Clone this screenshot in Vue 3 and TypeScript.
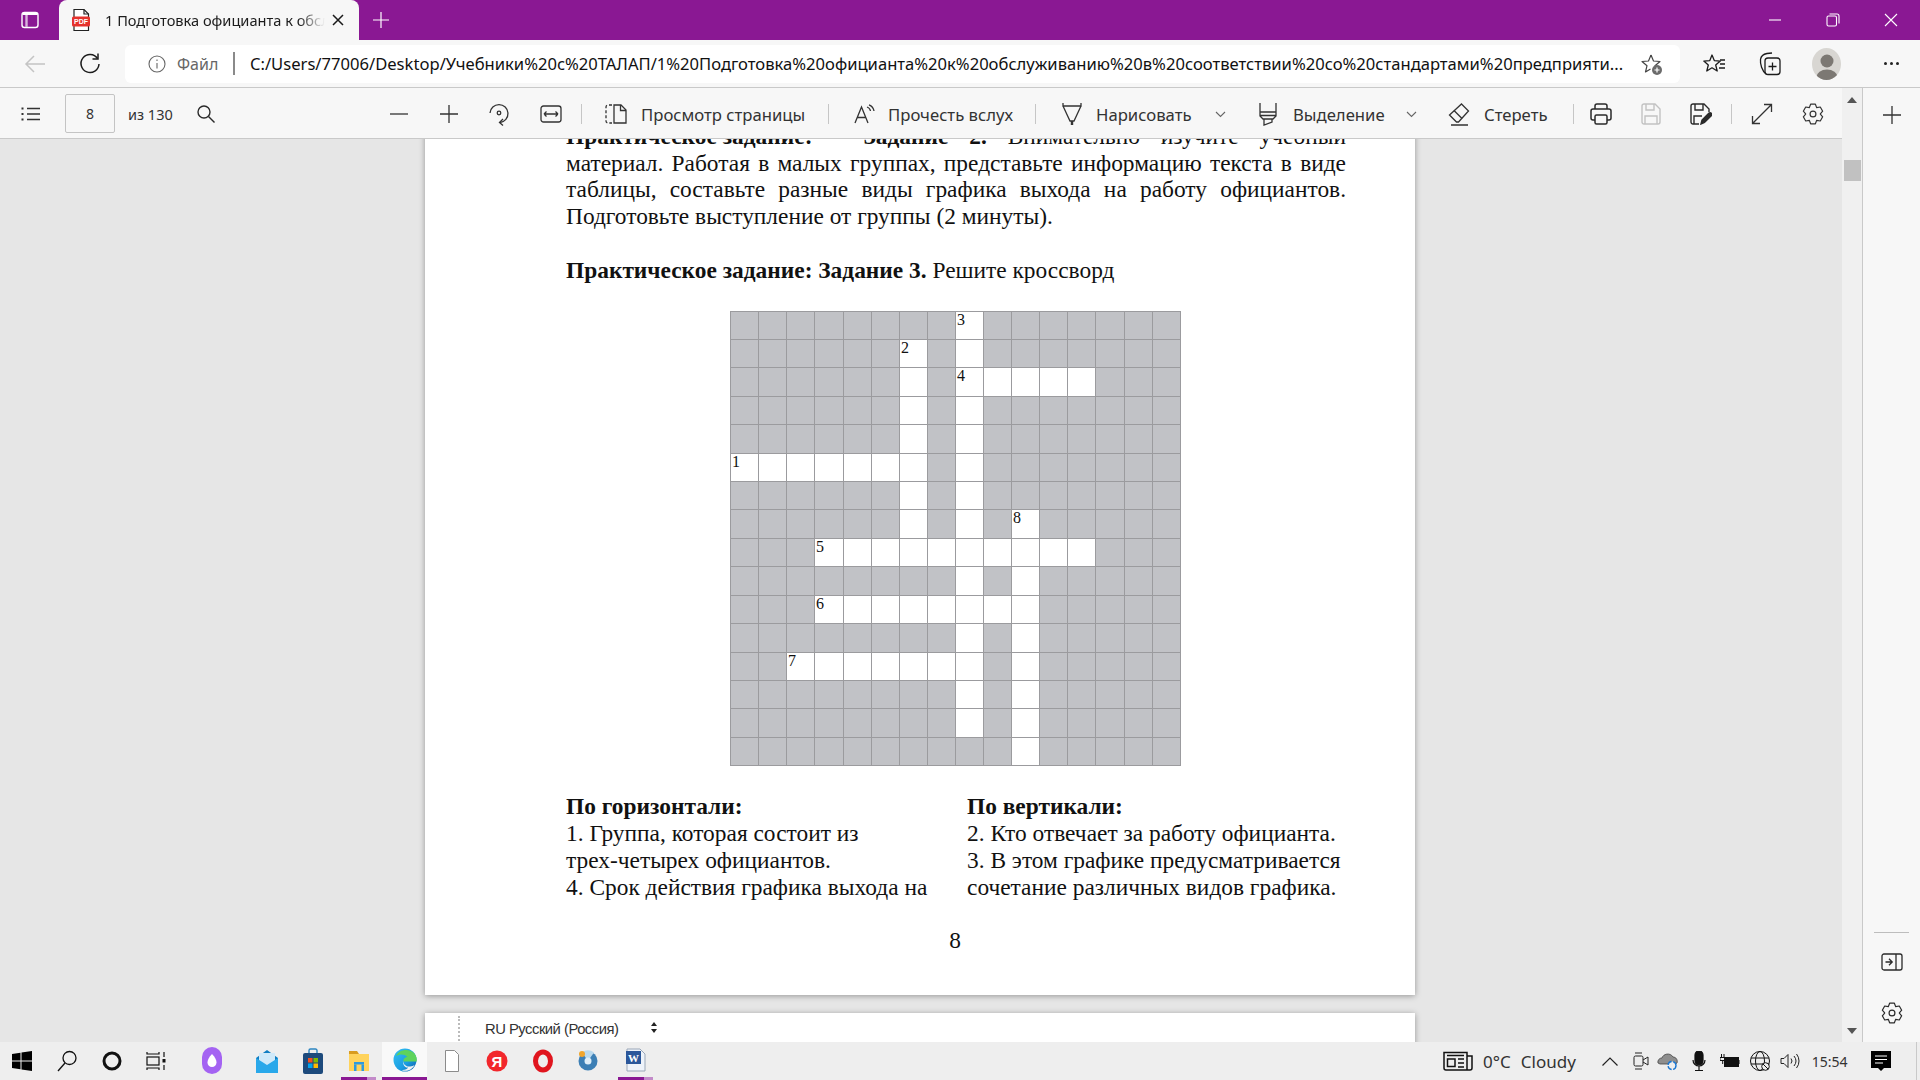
<template>
  <div class="screen">
    <!-- Browser title bar -->
    <header class="titlebar">
      <div class="tab-actions">
        <svg width="20" height="20" viewBox="0 0 20 20" fill="none" stroke="#fff" stroke-width="1.4">
          <rect x="2" y="2.5" width="16" height="15" rx="2.5" />
          <path d="M6.5 3v14" stroke="#d9b4dd" stroke-width="2.4" />
          <path d="M2.5 4h15" stroke-width="2" />
        </svg>
      </div>
      <div class="tab">
        <svg class="tab-icon" width="20" height="24" viewBox="0 0 20 24" fill="none">
          <path d="M3 22.5V1.5h10l4.500 4.500v16.500z" fill="#fff" stroke="#222" stroke-width="1.2" />
          <path d="M13 1.500v4.500h4.500" stroke="#222" stroke-width="1.2" />
          <rect x="1" y="8.500" width="18" height="10" rx="1.500" fill="#e5322d" />
          <text x="10" y="16" text-anchor="middle" class="pdf-text">PDF</text>
        </svg>
        <span class="tab-title">1 Подготовка официанта к обслуживанию</span>
        <svg class="tab-close" width="12" height="12" viewBox="0 0 12 12" stroke="#1a1a1a" stroke-width="1.500">
          <path d="M1 1l10 10M11 1L1 11" />
        </svg>
      </div>
      <svg class="tab-new" width="18" height="18" viewBox="0 0 18 18" stroke="#fff" stroke-width="1.200">
        <path d="M9 1v16M1 9h16" />
      </svg>
      <div class="window-controls">
        <svg width="14" height="14" viewBox="0 0 14 14" stroke="#fff" stroke-width="1.100" fill="none">
          <path d="M1 7h12" />
        </svg>
        <svg width="14" height="14" viewBox="0 0 14 14" stroke="#fff" stroke-width="1.100" fill="none">
          <rect x="1" y="3" width="9.500" height="10" rx="1.500" />
          <path d="M3.500 1h7.500a2 2 0 0 1 2 2v7.500" />
        </svg>
        <svg width="14" height="14" viewBox="0 0 14 14" stroke="#fff" stroke-width="1.100" fill="none">
          <path d="M1 1l12 12M13 1L1 13" />
        </svg>
      </div>
    </header>

    <!-- Address bar -->
    <div class="addressbar">
      <svg class="nav-back" width="22" height="20" viewBox="0 0 22 20" stroke="#c4c4c4" stroke-width="1.500" fill="none">
        <path d="M21 10H2M10 2l-8 8 8 8" />
      </svg>
      <svg class="nav-reload" width="22" height="24" viewBox="0 0 22 24" stroke="#1c1c1c" stroke-width="1.500" fill="none">
        <path d="M18.500 6.500A9 9 0 1 0 20 12" />
        <path d="M19 1.500v5.500h-5.500" />
      </svg>
      <div class="omnibox">
        <svg class="info" width="18" height="18" viewBox="0 0 18 18" fill="none" stroke="#666" stroke-width="1.100">
          <circle cx="9" cy="9" r="8" />
          <path d="M9 8v5.500M9 4.600v1.400" />
        </svg>
        <span class="scheme">Файл</span>
        <span class="scheme-sep"></span>
        <span class="url">{{ url }}</span>
        <svg class="star-add" width="24" height="24" viewBox="0 0 24 24" fill="none">
          <path d="M11 3l2.500 6 6.500.5-5 4.200 1 4.300M11 3L8.500 9 2 9.500l5 4.200L5.500 20l5-3" stroke="#444" stroke-width="1.200" stroke-linejoin="round" />
          <circle cx="17" cy="18" r="5" fill="#6b6b6b" />
          <path d="M17 15.500v5M14.500 18h5" stroke="#fff" stroke-width="1.200" />
        </svg>
      </div>
      <svg class="bar-fav" width="24" height="22" viewBox="0 0 24 22" fill="none" stroke="#1c1c1c" stroke-width="1.300" stroke-linejoin="round">
        <path d="M9 2l2.300 5.600 6 .5-4.600 3.900 1.500 6L9 14.800 3.800 18l1.500-6L.8 8.100l6-.5z" />
        <path d="M17 7h5M17 11h5M16 15h6" />
      </svg>
      <svg class="bar-coll" width="24" height="26" viewBox="0 0 24 26" fill="none" stroke="#1c1c1c" stroke-width="1.300">
        <path d="M8 23C4 20 2 13 2.500 8.500 3 5 6 3 9 2.500L14 2" />
        <rect x="7" y="7" width="15" height="16.500" rx="3" />
        <path d="M14.500 11.500v8M10.500 15.500h8" />
      </svg>
      <div class="avatar">
        <svg width="28" height="30" viewBox="0 0 28 30">
          <circle cx="14" cy="11" r="6.500" fill="#7c7873" />
          <ellipse cx="14" cy="27" rx="10.500" ry="7.500" fill="#7c7873" />
        </svg>
      </div>
      <div class="more"><i></i><i></i><i></i></div>
    </div>

    <div class="workspace">
      <div class="viewer-col">
        <!-- PDF toolbar -->
        <div class="pdf-toolbar">
          <svg class="t-list" width="20" height="14" viewBox="0 0 20 14" stroke="#333" stroke-width="1.300" fill="#333">
            <path d="M6 1.500h13M6 7h13M6 12.500h13" />
            <path d="M0.500 1.500h2M0.500 7h2M0.500 12.500h2" stroke-width="2" />
          </svg>
          <div class="page-input">8</div>
          <span class="page-total">из 130</span>
          <svg class="t-search" width="20" height="20" viewBox="0 0 20 20" fill="none" stroke="#2a2a2a" stroke-width="1.400">
            <circle cx="8" cy="8" r="6" />
            <path d="M12.500 12.500l6 6" />
          </svg>

          <svg class="t-minus" width="18" height="18" viewBox="0 0 18 18" stroke="#333" stroke-width="1.300"><path d="M0 9h18" /></svg>
          <svg class="t-plus" width="18" height="18" viewBox="0 0 18 18" stroke="#333" stroke-width="1.300"><path d="M0 9h18M9 0v18" /></svg>
          <svg class="t-rotate" width="22" height="24" viewBox="0 0 22 24" fill="none" stroke="#333" stroke-width="1.300">
            <path d="M2 11a9 9 0 1 1 10 9.500" />
            <circle cx="11" cy="11" r="1.800" />
            <path d="M15 17l-3.500 3.500 3.500 3" />
          </svg>
          <svg class="t-fit" width="22" height="18" viewBox="0 0 22 18" fill="none" stroke="#333" stroke-width="1.300">
            <rect x="1" y="1" width="20" height="16" rx="2.500" />
            <path d="M4 9h14M4 9l2.500-2.500M4 9l2.500 2.500M18 9l-2.500-2.500M18 9l-2.500 2.500" />
          </svg>
          <span class="t-sep sep-a"></span>
          <svg class="t-pageview" width="22" height="20" viewBox="0 0 22 20" fill="none" stroke="#333" stroke-width="1.300">
            <path d="M7 1H3a2 2 0 0 0-2 2v14a2 2 0 0 0 2 2h4" stroke-dasharray="3 2" />
            <path d="M9 1h7l5 5v13H9z" />
            <path d="M15.500 1v5.500H21" />
          </svg>
          <span class="t-label label-view">Просмотр страницы</span>
          <span class="t-sep sep-b"></span>
          <svg class="t-read" width="22" height="20" viewBox="0 0 22 20" fill="none" stroke="#333" stroke-width="1.300">
            <path d="M1 19L7.500 3 14 19M3.500 13.500h8" />
            <path d="M13 3a5 5 0 0 1 3.500 4M15 .800a8 8 0 0 1 5 6.200" />
          </svg>
          <span class="t-label label-read">Прочесть вслух</span>
          <span class="t-sep sep-c"></span>
          <svg class="t-draw" width="22" height="24" viewBox="0 0 22 24" fill="none" stroke="#333" stroke-width="1.300">
            <path d="M2 1v3h18V1M2 4l7 15h4l7-15" />
            <path d="M11 19v4" stroke-width="2.400" />
          </svg>
          <span class="t-label label-draw">Нарисовать</span>
          <svg class="t-chev chev-a" width="11" height="7" viewBox="0 0 11 7" fill="none" stroke="#666" stroke-width="1.100"><path d="M1 1l4.500 4.500L10 1" /></svg>
          <svg class="t-mark" width="20" height="24" viewBox="0 0 20 24" fill="none" stroke="#333" stroke-width="1.300">
            <path d="M2 1v9h16V1M2 10v4l3 3h10l3-3v-4M2 13.500h16M6 17v6l8-3v-3" />
          </svg>
          <span class="t-label label-mark">Выделение</span>
          <svg class="t-chev chev-b" width="11" height="7" viewBox="0 0 11 7" fill="none" stroke="#666" stroke-width="1.100"><path d="M1 1l4.500 4.500L10 1" /></svg>
          <svg class="t-erase" width="22" height="24" viewBox="0 0 22 24" fill="none" stroke="#333" stroke-width="1.300">
            <path d="M13.500 2l7 7-10 11h-2L1.500 13z" />
            <path d="M6 8.500l8 8M3 23h17" />
          </svg>
          <span class="t-label label-erase">Стереть</span>
          <span class="t-sep sep-d"></span>
          <svg class="t-print" width="22" height="22" viewBox="0 0 22 22" fill="none" stroke="#2a2a2a" stroke-width="1.500">
            <path d="M5 6V3a2 2 0 0 1 2-2h8a2 2 0 0 1 2 2v3" />
            <path d="M5 17H3a2 2 0 0 1-2-2V8a2 2 0 0 1 2-2h16a2 2 0 0 1 2 2v7a2 2 0 0 1-2 2h-2" />
            <rect x="5" y="12" width="12" height="9" rx="1.500" />
          </svg>
          <svg class="t-save" width="20" height="22" viewBox="0 0 20 22" fill="none" stroke="#c2c2c2" stroke-width="1.400">
            <path d="M1 3a2 2 0 0 1 2-2h11l5 5v13a2 2 0 0 1-2 2H3a2 2 0 0 1-2-2z" />
            <path d="M5 1v6h8V1M4 21v-8h12v8" />
          </svg>
          <svg class="t-saveas" width="22" height="22" viewBox="0 0 22 22" fill="none" stroke="#2a2a2a" stroke-width="1.400">
            <path d="M9 21H3a2 2 0 0 1-2-2V3a2 2 0 0 1 2-2h11l5 5v3" />
            <path d="M5 1v6h8V1M4 21v-8h8" />
            <path d="M11 21l1-4 7-7a1.800 1.800 0 0 1 2.500 2.500l-7 7z" fill="#2a2a2a" />
          </svg>
          <span class="t-sep sep-e"></span>
          <svg class="t-expand" width="22" height="22" viewBox="0 0 22 22" fill="none" stroke="#333" stroke-width="1.300">
            <path d="M1.500 20.500l19-19M13 1.500h7.500V9M1.500 13v7.500H9" />
          </svg>
          <svg class="t-gear" width="22" height="22" viewBox="0 0 24 24" fill="none" stroke="#333" stroke-width="1.300" stroke-linejoin="round">
            <path :d="gearPath" />
            <circle cx="12" cy="12" r="3.200" />
          </svg>
        </div>

        <!-- Scrolled PDF pages -->
        <main class="viewer">
          <article class="page">
            <div class="para first">
              <div class="jl"><b class="lead">Практическое задание:</b><span class="lead-gap"></span><b>Задание 2.</b> Внимательно изучите учебный</div>
              <div class="jl">материал. Работая в малых группах, представьте информацию текста в виде</div>
              <div class="jl">таблицы, составьте разные виды графика выхода на работу официантов.</div>
              <div>Подготовьте выступление от группы (2 минуты).</div>
            </div>
            <div class="para task"><b>Практическое задание: Задание 3.</b> Решите кроссворд</div>
            <div class="crossword">
              <div v-for="cell in cells" :key="cell.id" class="cw-cell" :class="{ open: cell.open }">
                <span v-if="cell.label" class="cw-num">{{ cell.label }}</span>
              </div>
            </div>
            <div class="clues">
              <div class="clue-col">
                <div><b>По горизонтали:</b></div>
                <div>1. Группа, которая состоит из</div>
                <div>трех-четырех официантов.</div>
                <div>4. Срок действия графика выхода на</div>
              </div>
              <div class="clue-col">
                <div><b>По вертикали:</b></div>
                <div>2. Кто отвечает за работу официанта.</div>
                <div>3. В этом графике предусматривается</div>
                <div>сочетание различных видов графика.</div>
              </div>
            </div>
            <div class="page-no">8</div>
          </article>
          <article class="page next">
            <span class="grip"></span>
            <span class="lang">RU Русский (Россия)</span>
            <span class="spin"><i class="up"></i><i class="down"></i></span>
          </article>
        </main>
      </div>

      <!-- Scrollbar -->
      <div class="scrollbar">
        <i class="arrow-up"></i>
        <div class="thumb"></div>
        <i class="arrow-down"></i>
      </div>

      <!-- Edge side rail -->
      <aside class="rail">
        <svg class="rail-plus" width="18" height="18" viewBox="0 0 18 18" stroke="#333" stroke-width="1.300"><path d="M9 0v18M0 9h18" /></svg>
        <div class="rail-line"></div>
        <svg class="rail-panel" width="22" height="18" viewBox="0 0 22 18" fill="none" stroke="#2a2a2a" stroke-width="1.300">
          <rect x="1" y="1" width="20" height="16" rx="2" />
          <path d="M15 1v16M4.500 9h6.500M8 5.800L11.200 9 8 12.200" />
        </svg>
        <svg class="rail-gear" width="22" height="22" viewBox="0 0 24 24" fill="none" stroke="#2a2a2a" stroke-width="1.300" stroke-linejoin="round">
          <path :d="gearPath" />
          <circle cx="12" cy="12" r="3.200" />
        </svg>
      </aside>
    </div>

    <!-- Windows taskbar -->
    <footer class="taskbar">
      <div class="slot s-win">
        <svg width="20" height="20" viewBox="0 0 20 20" fill="#000"><path d="M0 3l8.500-1.200V9.500H0zM9.500 1.600L20 0v9.500H9.500zM0 10.500h8.500v7.700L0 17zM9.500 10.500H20V20L9.500 18.400z" /></svg>
      </div>
      <div class="slot s-std">
        <svg width="20" height="22" viewBox="0 0 20 22" fill="none" stroke="#111" stroke-width="1.300"><circle cx="12.500" cy="8" r="6.500" /><path d="M8 13L1 21" /></svg>
      </div>
      <div class="slot s-std">
        <svg width="20" height="20" viewBox="0 0 20 20" fill="none" stroke="#111" stroke-width="3"><circle cx="10" cy="10" r="8" /></svg>
      </div>
      <div class="slot s-view">
        <svg width="20" height="20" viewBox="0 0 20 20" fill="none" stroke="#111" stroke-width="1.200">
          <path d="M1 1v2h12V1M1 19v-2h12v2" />
          <rect x="1" y="6" width="12" height="8" />
          <path d="M18 1v5M18 14v5" />
          <rect x="16.500" y="8" width="3" height="3.500" fill="#111" stroke="none" />
        </svg>
      </div>
      <div class="slot s-alice">
        <svg width="22" height="28" viewBox="0 0 22 28">
          <rect x="1" y="0" width="20" height="27" rx="10" fill="#a463f2" />
          <path d="M11 7c3 3 4.500 6 4.500 8.500a4.500 4.500 0 0 1-9 0C6.500 13 8 10 11 7z" fill="#fff" />
        </svg>
      </div>
      <div class="slot s-mail">
        <svg width="22" height="24" viewBox="0 0 22 24">
          <path d="M0 9L11 1l11 8v15H0z" fill="#0f7dc2" />
          <path d="M3 4h16v9l-8 5-8-5z" fill="#cfe9f9" />
          <path d="M0 9l11 7 11-7v15H0z" fill="#29a8ea" />
        </svg>
      </div>
      <div class="slot s-std2">
        <svg width="20" height="26" viewBox="0 0 20 26">
          <path d="M6 5V2.500A1.500 1.500 0 0 1 7.500 1h5A1.500 1.500 0 0 1 14 2.500V5" fill="none" stroke="#2e86c1" stroke-width="1.400" />
          <rect x="0" y="5" width="20" height="21" rx="2" fill="#1d4a7c" />
          <rect x="5" y="10" width="4.500" height="4.500" fill="#f25022" />
          <rect x="10.500" y="10" width="4.500" height="4.500" fill="#7fba00" />
          <rect x="5" y="15.500" width="4.500" height="4.500" fill="#00a4ef" />
          <rect x="10.500" y="15.500" width="4.500" height="4.500" fill="#ffb900" />
        </svg>
      </div>
      <div class="slot s-files running">
        <svg width="20" height="22" viewBox="0 0 20 22">
          <path d="M0 2h8l2 3H0z" fill="#d99c1f" />
          <rect x="0" y="5" width="20" height="17" fill="#ffd35c" />
          <rect x="5" y="13" width="10" height="2.500" fill="#2b9ae0" />
          <path d="M5 15.500h2.500V22H5zM12.500 15.500H15V22h-2.500z" fill="#2b9ae0" />
        </svg>
      </div>
      <div class="slot s-edge active">
        <svg width="24" height="24" viewBox="0 0 24 24">
          <defs>
            <linearGradient id="edge-a" x1="0" y1="0" x2="1" y2="1">
              <stop offset="0" stop-color="#35c1f1" />
              <stop offset="0.6" stop-color="#1b9de2" />
              <stop offset="1" stop-color="#0c59a4" />
            </linearGradient>
          </defs>
          <circle cx="12" cy="12" r="11.500" fill="url(#edge-a)" />
          <path d="M3 8C6 1 16 0 21 5c2.500 2.500 3 6 2.800 8.500H10.500c-.5-3 2-4.500 4-4.500-3-3.500-8.500-3-11.500-1z" fill="#5ed35c" />
          <path d="M10 12.500c0 4 3.500 6.500 7 6 2 0 3.500-.8 4.500-1.500-2.500 5.500-9 7-13 5 3 .5 6-1 6.500-2.500-3 .5-5.500-3-5-7z" fill="#f3f3f3" />
        </svg>
      </div>
      <div class="slot s-std3 s-doc">
        <svg width="14" height="22" viewBox="0 0 14 22" fill="#fff" stroke="#8b8b8b" stroke-width="1"><path d="M.5.500h9l4 4v17H.5z" /></svg>
      </div>
      <div class="slot s-std3">
        <svg width="22" height="24" viewBox="0 0 22 24"><circle cx="11" cy="12" r="10.500" fill="#f2272c" /><text x="11" y="18" text-anchor="middle" class="ya-text">Я</text></svg>
      </div>
      <div class="slot s-std3">
        <svg width="20" height="24" viewBox="0 0 20 24" fill="none"><ellipse cx="10" cy="12" rx="7.500" ry="9" stroke="#e0151e" stroke-width="5" /></svg>
      </div>
      <div class="slot s-std3">
        <svg width="20" height="24" viewBox="0 0 20 24">
          <circle cx="10" cy="12" r="9.500" fill="#3c7fb5" />
          <path d="M10 12L4 3.500A9.500 9.500 0 0 1 16 3.500z" fill="#b9d9ee" />
          <circle cx="10" cy="12" r="3.500" fill="#dfeef8" />
          <circle cx="4" cy="5" r="3" fill="#f0a52c" />
        </svg>
      </div>
      <div class="slot s-word running">
        <svg width="20" height="24" viewBox="0 0 20 24">
          <path d="M1 1h13l5 5v17H1z" fill="#eef3fa" stroke="#9aa7b8" />
          <rect x="0" y="3" width="15" height="13" fill="#2b579a" />
          <text x="7.500" y="14" text-anchor="middle" class="w-text">W</text>
        </svg>
      </div>

      <div class="tray">
        <svg class="tr-news" width="30" height="20" viewBox="0 0 30 20" fill="none" stroke="#111" stroke-width="1.500">
          <path d="M1 1.500h23V19H3a2 2 0 0 1-2-2zM24 5h5v12a2 2 0 0 1-2 2h-3" />
          <rect x="4.500" y="8" width="7.500" height="7.500" />
          <path d="M4 4.500h17M15 8h6M15 12h6M15 16h6" />
        </svg>
        <span class="weather">0°C</span>
        <span class="weather cloudy">Cloudy</span>
        <svg class="tr-caret" width="16" height="9" viewBox="0 0 16 9" fill="none" stroke="#222" stroke-width="1.200"><path d="M.5 8.500L8 1l7.500 7.500" /></svg>
        <svg class="tr-cam" width="16" height="20" viewBox="0 0 16 20" fill="none" stroke="#222" stroke-width="1">
          <rect x="1" y="5" width="9" height="10" rx="1.500" />
          <path d="M10 9l5-3v8l-5-3M2 2h7M2 18h7" />
        </svg>
        <svg class="tr-cloud" width="22" height="20" viewBox="0 0 22 20">
          <path d="M1 12a4 4 0 0 1 4-5c1-4 8-6 11-1 3 0 5 3 4 6-1 1-2 1-4 1H3z" fill="#8e8e8e" stroke="#444" stroke-width=".8" />
          <circle cx="15" cy="14.500" r="4" fill="#eee" stroke="#1976d2" stroke-width="1.400" stroke-dasharray="5 1.500" />
        </svg>
        <svg class="tr-mic" width="14" height="20" viewBox="0 0 14 20" fill="none" stroke="#111" stroke-width="1.200">
          <rect x="3" y="0" width="8" height="14" rx="4" fill="#111" />
          <path d="M1 9a6 6 0 0 0 12 0M7 15v4M3 19.500h8" />
        </svg>
        <svg class="tr-batt" width="20" height="14" viewBox="0 0 20 14" fill="none">
          <rect x="4.500" y="3.500" width="14" height="9" fill="#111" stroke="#111" />
          <path d="M19 6v4" stroke="#111" stroke-width="1" />
          <path d="M1.500 0v3M4 0v3M0 3.500h5.500v3H0zM2.700 6.500V10" stroke="#111" stroke-width="1" />
        </svg>
        <svg class="tr-globe" width="20" height="20" viewBox="0 0 20 20" fill="none" stroke="#111" stroke-width="1">
          <circle cx="10" cy="10" r="9.500" />
          <ellipse cx="10" cy="10" rx="4.500" ry="9.500" />
          <path d="M1 7h18M1 13h18" />
          <circle cx="15.500" cy="15.500" r="3.800" fill="#eee" />
          <path d="M13 13l5 5" />
        </svg>
        <svg class="tr-vol" width="20" height="16" viewBox="0 0 20 16" fill="none" stroke="#222" stroke-width="1">
          <path d="M1 5.500h3L8 1.500v13l-4-4H1z" />
          <path d="M11 5.500a4 4 0 0 1 0 5M14 3a8 8 0 0 1 0 10M16.500 1a11 11 0 0 1 0 14" />
        </svg>
        <span class="clock">15:54</span>
        <svg class="tr-note" width="20" height="20" viewBox="0 0 20 20">
          <path d="M0 0h20v17h-7l-3 3-3-3H0z" fill="#000" />
          <path d="M4 5h12M4 8.500h12M4 12h8" stroke="#fff" stroke-width="1" />
        </svg>
        <span class="show-desktop"></span>
      </div>
    </footer>
  </div>
</template>

<script setup lang="ts">
import { computed } from "vue";

interface Cell {
  id: string;
  open: boolean;
  label?: number;
}

const url =
  "C:/Users/77006/Desktop/Учебники%20c%20ТАЛАП/1%20Подготовка%20официанта%20к%20обслуживанию%20в%20соответствии%20со%20стандартами%20предприяти...";

// open squares per row of the 16x16 crossword
const openByRow: number[][] = [
  [8],
  [6, 8],
  [6, 8, 9, 10, 11, 12],
  [6, 8],
  [6, 8],
  [0, 1, 2, 3, 4, 5, 6, 8],
  [6, 8],
  [6, 8, 10],
  [3, 4, 5, 6, 7, 8, 9, 10, 11, 12],
  [8, 10],
  [3, 4, 5, 6, 7, 8, 9, 10],
  [8, 10],
  [2, 3, 4, 5, 6, 7, 8, 10],
  [8, 10],
  [8, 10],
  [10],
];

const labels: Record<string, number> = {
  "0-8": 3,
  "1-6": 2,
  "2-8": 4,
  "5-0": 1,
  "7-10": 8,
  "8-3": 5,
  "10-3": 6,
  "12-2": 7,
};

const cells = computed<Cell[]>(() => {
  const out: Cell[] = [];
  openByRow.forEach((open, row) => {
    for (let col = 0; col < 16; col++) {
      const id = `${row}-${col}`;
      out.push({ id, open: open.includes(col), label: labels[id] });
    }
  });
  return out;
});

// six lobed settings gear
const gearPath = computed(() => {
  const pts: string[] = [];
  for (let i = 0; i < 6; i++) {
    const a = (i * Math.PI) / 3 - Math.PI / 2;
    const at = (r: number, d: number) =>
      `${(12 + r * Math.cos(a + d)).toFixed(2)} ${(12 + r * Math.sin(a + d)).toFixed(2)}`;
    pts.push(at(8, -0.52), at(11, -0.24), at(11, 0.24), at(8, 0.52));
  }
  return `M${pts.join("L")}Z`;
});
</script>

<style>
html,
body {
  margin: 0;
  background: #e6e6e6;
}
</style>

<style scoped>
.screen {
  width: 1920px;
  height: 1080px;
  display: flex;
  flex-direction: column;
  overflow: hidden;
  font-family: "Noto Sans", "Open Sans", sans-serif;
  color: #1c1c1c;
}

/* title bar */
.titlebar {
  height: 40px;
  flex: none;
  display: flex;
  align-items: center;
  background: #8a1893;
}
.tab-actions {
  width: 59px;
  padding-left: 20px;
  box-sizing: border-box;
  display: flex;
}
.tab {
  width: 300px;
  height: 40px;
  display: flex;
  align-items: center;
  background: #f7f7f7;
  border-radius: 8px 8px 0 0;
  position: relative;
}
.tab-icon {
  margin-left: 12px;
}
.pdf-text {
  font: bold 7px "Liberation Sans", sans-serif;
  fill: #fff;
}
.tab-title {
  margin-left: 14px;
  width: 220px;
  overflow: hidden;
  white-space: nowrap;
  font-size: 14.6px;
  -webkit-mask-image: linear-gradient(90deg, #000 88%, transparent);
  mask-image: linear-gradient(90deg, #000 88%, transparent);
}
.tab-close {
  margin-left: 7px;
}
.tab-new {
  margin-left: 13px;
}
.window-controls {
  margin-left: auto;
  margin-right: 22px;
  display: flex;
  gap: 44px;
}

/* address bar */
.addressbar {
  height: 48px;
  flex: none;
  box-sizing: border-box;
  border-bottom: 1px solid #c9c9c9;
  display: flex;
  align-items: center;
  background: #f7f7f7;
}
.nav-back {
  margin-left: 24px;
}
.nav-reload {
  margin-left: 33px;
}
.omnibox {
  margin-left: 24px;
  width: 1555px;
  height: 38px;
  background: #fff;
  border-radius: 6px;
  display: flex;
  align-items: center;
}
.info {
  margin-left: 23px;
}
.scheme {
  margin-left: 11px;
  width: 42px;
  font-size: 16px;
  color: #666;
  white-space: nowrap;
}
.scheme-sep {
  width: 2px;
  height: 23px;
  margin-left: 14px;
  background: #8a8a8a;
}
.url {
  margin-left: 15px;
  width: 1376px;
  white-space: nowrap;
  overflow: hidden;
  font-size: 16.6px;
  color: #111;
}
.star-add {
  margin-left: 14px;
}
.bar-fav {
  margin-left: 23px;
}
.bar-coll {
  margin-left: 31px;
}
.avatar {
  margin-left: 30px;
  width: 29px;
  height: 32px;
  border-radius: 50%;
  background: #d8d6d2;
  overflow: hidden;
  display: flex;
  justify-content: center;
  align-items: flex-end;
}
.more {
  margin-left: 43px;
  display: flex;
  gap: 3px;
}
.more i {
  width: 3px;
  height: 3px;
  border-radius: 50%;
  background: #222;
}

/* workspace */
.workspace {
  flex: 1;
  min-height: 0;
  display: flex;
}
.viewer-col {
  width: 1842px;
  display: flex;
  flex-direction: column;
}

/* pdf toolbar: every control keeps its own left margin */
.pdf-toolbar {
  height: 51px;
  flex: none;
  box-sizing: border-box;
  padding-top: 2px;
  border-bottom: 1px solid #c9c9c9;
  background: #f7f7f7;
  display: flex;
  align-items: center;
  font-size: 16.7px;
  color: #333;
  position: relative;
  z-index: 1;
}
.pdf-toolbar svg,
.pdf-toolbar span,
.pdf-toolbar div {
  flex: none;
}
.t-list {
  margin-left: 21px;
}
.page-input {
  margin-left: 24px;
  margin-top: -2px;
  width: 50px;
  height: 39px;
  box-sizing: border-box;
  border: 1px solid #c4c4c4;
  border-radius: 2px;
  display: flex;
  align-items: center;
  justify-content: center;
  font-size: 14px;
}
.page-total {
  margin-left: 13px;
  width: 44px;
  font-size: 14.5px;
  white-space: nowrap;
}
.t-search {
  margin-left: 24px;
}
.t-minus {
  margin-left: 174px;
}
.t-plus {
  margin-left: 32px;
}
.t-rotate {
  margin-left: 30px;
}
.t-fit {
  margin-left: 30px;
}
.t-sep {
  width: 1px;
  height: 20px;
  background: #c6c6c6;
}
.sep-a {
  margin-left: 19px;
}
.t-pageview {
  margin-left: 23px;
}
.t-label {
  white-space: nowrap;
}
.label-view {
  margin-left: 14px;
  width: 162px;
}
.sep-b {
  margin-left: 25px;
}
.t-read {
  margin-left: 25px;
}
.label-read {
  margin-left: 12px;
  width: 123px;
}
.sep-c {
  margin-left: 24px;
}
.t-draw {
  margin-left: 25px;
}
.label-draw {
  margin-left: 13px;
  width: 93px;
}
.chev-a {
  margin-left: 26px;
}
.t-mark {
  margin-left: 32px;
}
.label-mark {
  margin-left: 15px;
  width: 89px;
}
.chev-b {
  margin-left: 24px;
}
.t-erase {
  margin-left: 31px;
}
.label-erase {
  margin-left: 14px;
  width: 62px;
}
.sep-d {
  margin-left: 27px;
}
.t-print {
  margin-left: 16px;
}
.t-save {
  margin-left: 29px;
}
.t-saveas {
  margin-left: 29px;
}
.sep-e {
  margin-left: 19px;
}
.t-expand {
  margin-left: 19px;
}
.t-gear {
  margin-left: 29px;
}

/* pages */
.viewer {
  flex: 1;
  min-height: 0;
  overflow: hidden;
  background: #e6e6e6;
  font-family: "Liberation Serif", "Times New Roman", serif;
  color: #111;
}
.page {
  width: 990px;
  margin-left: 425px;
  background: #fff;
  box-shadow: 0 1px 6px rgba(0, 0, 0, 0.35);
  font-size: 23.4px;
  line-height: 26.6px;
  box-sizing: border-box;
  padding-bottom: 41px;
}
.para {
  width: 780px;
  margin-left: 141px;
}
.first {
  margin-top: -16px;
}
.jl {
  text-align: justify;
  text-align-last: justify;
}
.lead {
  display: inline-block;
}
.lead-gap {
  display: inline-block;
  width: 51px;
}
.task {
  margin-top: 28px;
}
.crossword {
  margin: 27px 0 0 305px;
  width: 451px;
  display: grid;
  grid-template-columns: 27px 27px 27px 28px 27px 27px 27px 27px 27px 27px 27px 27px 27px 28px 27px 27px;
  grid-template-rows: 27px 27px 28px 27px 28px 27px 27px 28px 27px 28px 27px 28px 27px 27px 28px 27px;
  gap: 1px;
  padding: 1px;
  box-sizing: border-box;
  background: #9b9b9e;
}
.cw-cell {
  background: #c1c2c6;
  font-size: 16px;
  line-height: 16px;
}
.cw-cell.open {
  background: #fff;
}
.cw-num {
  display: block;
  padding-left: 1px;
}
.clues {
  margin: 27px 0 0 141px;
  display: flex;
}
.clue-col {
  white-space: nowrap;
  line-height: 27px;
}
.clue-col:first-child {
  width: 401px;
}
.page-no {
  margin-top: 26px;
  text-align: center;
  width: 100%;
  padding-left: 70px;
  box-sizing: border-box;
}
.page.next {
  margin-top: 18px;
  height: 60px;
  padding: 0;
  display: flex;
  align-items: flex-start;
  font-family: "Liberation Sans", Arial, sans-serif;
  font-size: 14.8px;
  line-height: 18px;
  letter-spacing: -0.5px;
  color: #333;
}
.grip {
  margin: 3px 0 0 33px;
  height: 40px;
  border-left: 2px dotted #bbb;
}
.lang {
  margin: 7px 0 0 25px;
  width: 166px;
  white-space: nowrap;
}
.spin {
  margin-top: 9px;
  display: flex;
  flex-direction: column;
  gap: 3px;
}
.spin i {
  display: block;
  width: 0;
  height: 0;
  border-left: 3px solid transparent;
  border-right: 3px solid transparent;
}
.spin .up {
  border-bottom: 4px solid #222;
}
.spin .down {
  border-top: 4px solid #222;
}

/* scrollbar */
.scrollbar {
  width: 20px;
  background: #f0f0f0;
  display: flex;
  flex-direction: column;
  align-items: center;
  position: relative;
}
.arrow-up,
.arrow-down {
  width: 0;
  height: 0;
  border-left: 5px solid transparent;
  border-right: 5px solid transparent;
}
.arrow-up {
  margin-top: 9px;
  border-bottom: 6px solid #555;
}
.arrow-down {
  margin-top: auto;
  margin-bottom: 8px;
  border-top: 6px solid #555;
}
.thumb {
  margin-top: 57px;
  width: 17px;
  height: 21px;
  background: #c1c1c1;
}

/* side rail */
.rail {
  flex: 1;
  box-sizing: border-box;
  border-left: 1px solid #c9c9c9;
  background: #f7f7f7;
  display: flex;
  flex-direction: column;
  align-items: center;
}
.rail-plus {
  margin-top: 18px;
}
.rail-line {
  margin-top: auto;
  width: 35px;
  height: 1px;
  background: #bdbdbd;
}
.rail-panel {
  margin-top: 20px;
}
.rail-gear {
  margin: 31px 0 18px;
}

/* taskbar */
.taskbar {
  height: 38px;
  flex: none;
  display: flex;
  background: #eeeeee;
  position: relative;
}
.slot {
  height: 38px;
  flex: none;
  box-sizing: border-box;
  display: flex;
  align-items: center;
  justify-content: center;
}
.s-win {
  width: 44px;
}
.s-std {
  width: 45px;
}
.s-view {
  width: 44px;
}
.s-alice {
  width: 45px;
  margin-left: 11px;
}
.s-mail {
  width: 45px;
  margin-left: 10px;
}
.s-std2 {
  width: 45px;
  margin-left: 1px;
}
.s-files {
  width: 35px;
  margin-left: 6px;
}
.s-edge {
  width: 45px;
  margin-left: 6px;
  background: #f9f9f9;
}
.s-std3 {
  width: 45.5px;
}
.s-doc {
  margin-left: 2px;
}
.s-word {
  width: 35px;
  margin-left: 7px;
}
.running {
  border-bottom: 3px solid;
  border-image: linear-gradient(90deg, #8a1893 72%, #c38bc9 72%) 1;
}
.active {
  border-bottom: 3px solid #8a1893;
}
.ya-text {
  font: bold 15px "Liberation Sans", sans-serif;
  fill: #fff;
}
.w-text {
  font: bold 11px "Liberation Serif", serif;
  fill: #fff;
}
.tray {
  position: absolute;
  top: 0;
  left: 1443px;
  right: 0;
  height: 38px;
  display: flex;
  align-items: center;
}
.tr-news {
  flex: none;
}
.weather {
  margin-left: 10px;
  font-size: 17px;
  color: #333;
  white-space: nowrap;
}
.cloudy {
  margin-left: 10px;
}
.tr-caret {
  margin-left: 26px;
}
.tr-cam {
  margin-left: 15px;
}
.tr-cloud {
  margin-left: 8px;
}
.tr-mic {
  margin-left: 13px;
}
.tr-batt {
  margin-left: 14px;
}
.tr-globe {
  margin-left: 10px;
}
.tr-vol {
  margin-left: 10px;
}
.clock {
  margin-left: 12px;
  font-size: 14px;
  color: #333;
}
.tr-note {
  margin-left: 23px;
}
.show-desktop {
  margin-left: 25px;
  width: 1px;
  height: 38px;
  background: #c9c9c9;
}
</style>
